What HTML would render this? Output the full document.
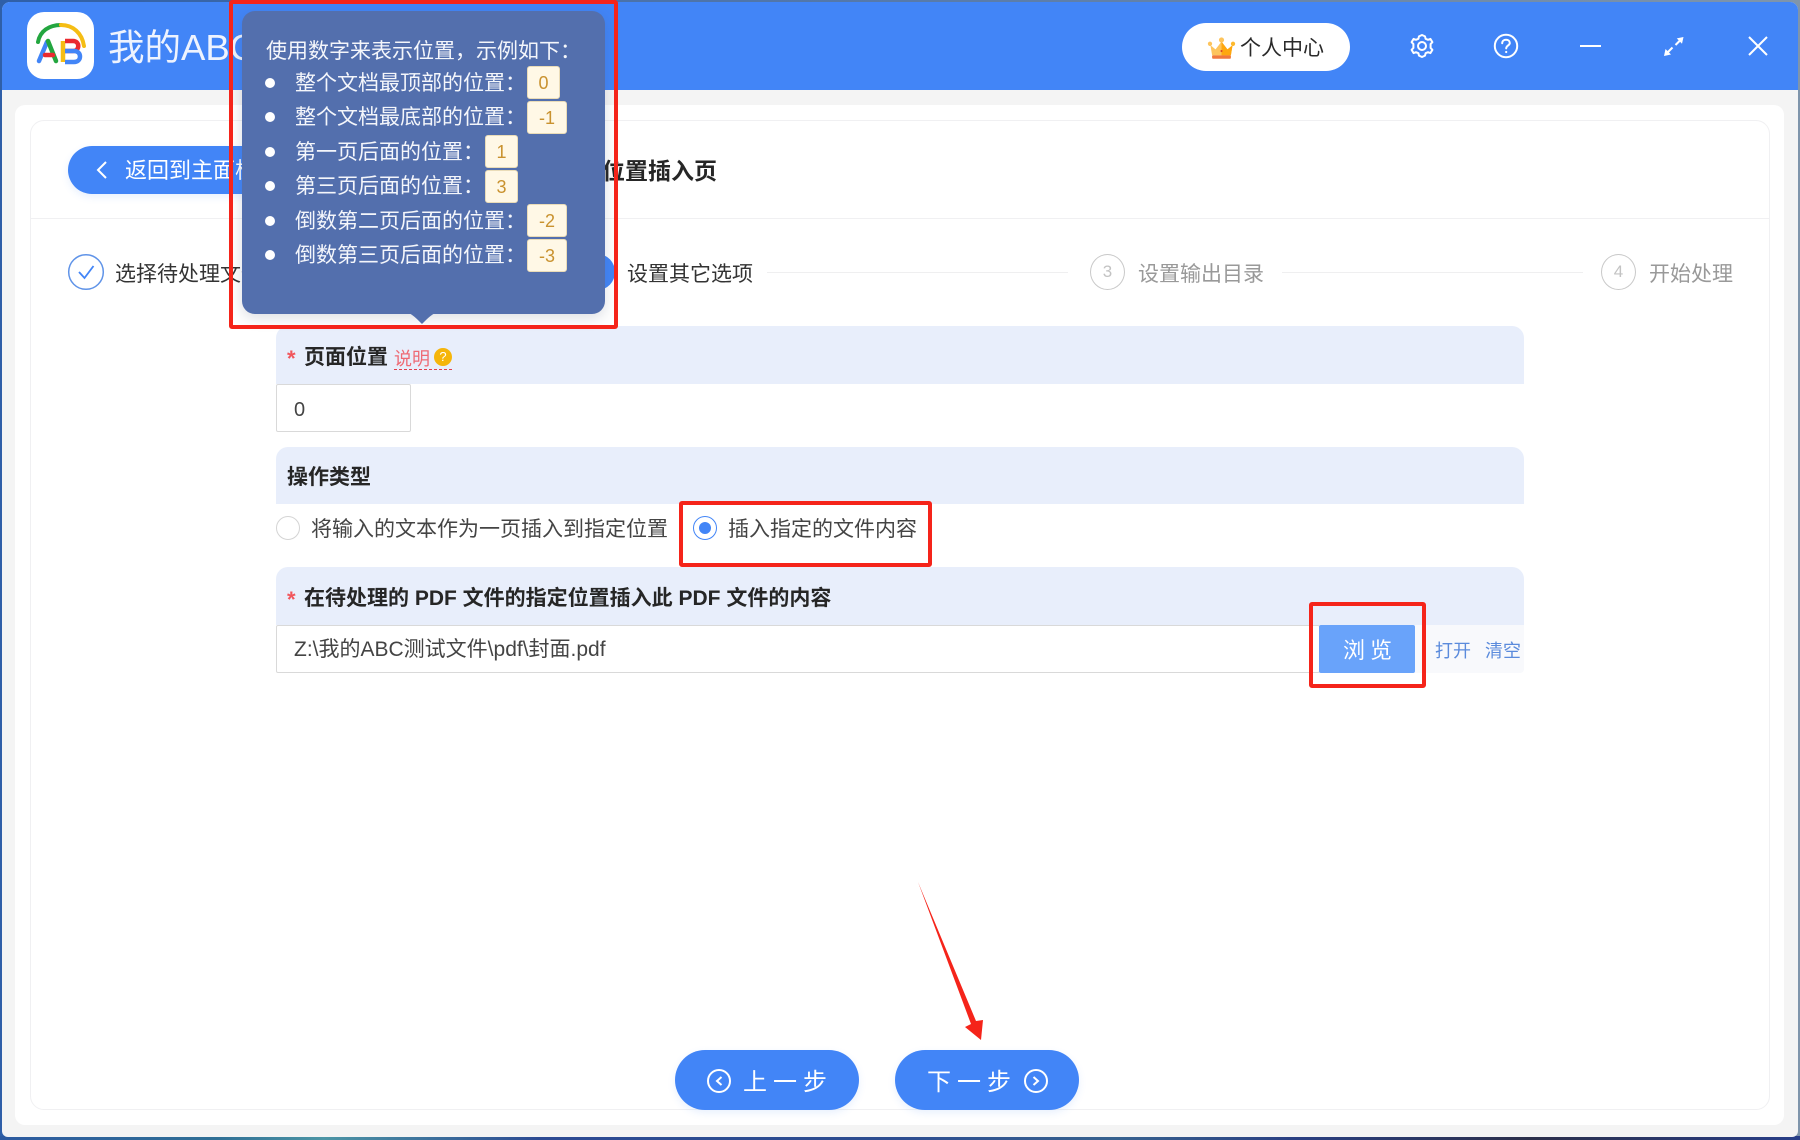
<!DOCTYPE html>
<html lang="zh-CN">
<head>
<meta charset="utf-8">
<title>我的ABC</title>
<style>
*{box-sizing:border-box}
html,body{margin:0;padding:0}
body{width:1800px;height:1140px;overflow:hidden;position:relative;background:linear-gradient(90deg,#2f5fa8 0,#7f95ab 100%);font-family:"Liberation Sans","Noto Sans CJK SC",sans-serif;color:#333}
.a{position:absolute}
.t{position:absolute;white-space:nowrap;line-height:30px;height:30px;font-size:21px;margin-top:2px}
.desk{left:0;top:1136px;width:1800px;height:4px;background:linear-gradient(90deg,#2d5aa0 0,#2f6f95 12%,#4c95a5 18%,#2c4a92 30%,#2d4d90 50%,#37628f 62%,#2a3f82 72%,#2b2f4a 85%,#283e88 100%)}
.win{left:2px;top:2px;width:1796px;height:1135px;background:#f4f4f4;border-radius:8px 8px 6px 6px;overflow:hidden}
.hdr{left:2px;top:2px;width:1796px;height:88px;background:#4285f7;border-radius:8px 8px 0 0}
.card{left:15px;top:105px;width:1769px;height:1020px;background:#fff;border-radius:10px}
.inner{left:30px;top:120px;width:1740px;height:990px;border:1px solid #f0f0f2;border-radius:14px}
.div{left:31px;top:218px;width:1738px;height:1px;background:#f0f0f2}
.sec{background:#e8eefb;left:276px;width:1248px;border-radius:12px 12px 0 0}
.b{font-weight:700;color:#262626;font-size:21px;margin-top:1px}
.star{color:#f1565c;font-weight:700;font-size:22px}
.inp{background:#fff;border:1px solid #d9d9d9;border-radius:2px}
.step{color:#999;font-size:21px}
.circ{width:35px;height:36px;border-radius:50%;border:1.5px solid #c9c9c9;color:#c3c3c3;font-size:17px;text-align:center;line-height:33px}
.line{height:1px;background:#efeff0;top:272px}
.red{border:4px solid #f5241a;border-radius:3px}
.pill{background:#4285f7;border-radius:30px;top:1050px;width:184px;height:60px;box-shadow:0 3px 8px rgba(66,133,247,.12)}
.btxt{color:#fff;font-size:24px;letter-spacing:6px;line-height:30px;height:30px;top:1068px;white-space:nowrap}
.tip{left:242px;top:11px;width:363px;height:303px;background:#536fad;border-radius:13px;box-shadow:0 4px 14px rgba(60,70,100,.18)}
.tt{color:#f4f6fb;font-size:21px;position:absolute;white-space:nowrap;line-height:30px;height:30px;margin-top:2px}
.dot{position:absolute;width:10px;height:10px;border-radius:50%;background:#fff;left:265px}
.code{position:absolute;height:33px;background:#fff8e6;border:1px solid #eadcb8;border-radius:3px;color:#c9922f;font-size:18px;text-align:center;line-height:32px}
</style>
</head>
<body>
<div class="a desk"></div>
<div class="a win"></div>
<div class="a hdr"></div>

<!-- logo -->
<svg class="a" style="left:20px;top:5px" width="85" height="80" viewBox="0 0 85 80">
<rect x="7" y="7" width="67" height="67" rx="17" fill="#fff"/>
<path d="M18 37C20 26 29 20 41 20" fill="none" stroke="#23a63f" stroke-width="4" stroke-linecap="round"/>
<path d="M41 20C53 20 62 28 64 41" fill="none" stroke="#f5bd14" stroke-width="4" stroke-linecap="round"/>
<path d="M19 56L27 37" fill="none" stroke="#4285f7" stroke-width="4.5" stroke-linecap="round"/>
<path d="M28 36L36 56" fill="none" stroke="#23a63f" stroke-width="4.5" stroke-linecap="round"/>
<path d="M25 50H33" fill="none" stroke="#ea2a30" stroke-width="4.5" stroke-linecap="round"/>
<path d="M43 36V57" fill="none" stroke="#f5bd14" stroke-width="4.5"/>
<path d="M45 36H53C60 36 60 46 53 46H45" fill="none" stroke="#ea2a30" stroke-width="4.5"/>
<path d="M45 46H54C62 46 62 57 54 57H45" fill="none" stroke="#4285f7" stroke-width="4.5"/>
</svg>
<div class="t" style="left:108px;top:25px;height:42px;line-height:42px;font-size:36.5px;color:#eef3fe">我的ABC</div>

<!-- header right -->
<div class="a" style="left:1182px;top:23px;width:168px;height:48px;background:#fff;border-radius:24px"></div>
<svg class="a" style="left:1207px;top:36px" width="29" height="25" viewBox="0 0 34 28">
<path d="M4 10L10 15L17 6L24 15L30 10L28 22H6Z" fill="#fdc45c"/>
<path d="M17 6L24 15L30 10L28 22H17Z" fill="#fea70f"/>
<circle cx="3.5" cy="8.5" r="2.5" fill="#fdc45c"/><circle cx="17" cy="4" r="3" fill="#fdc45c"/><circle cx="30.5" cy="8.5" r="2.5" fill="#fdb92e"/>
<rect x="6" y="22" width="22" height="4" rx="1" fill="#f0783c"/>
<circle cx="17" cy="17" r="1.2" fill="#d8432a"/>
</svg>
<div class="t" style="left:1240px;top:32px;color:#2a2a2a">个人中心</div>

<svg class="a" style="left:1408px;top:32px" width="28" height="28" viewBox="0 0 28 28" fill="none" stroke="#fff" stroke-width="2" stroke-linejoin="round">
<path d="M14 3L17 4.4L17.6 6.8L20 7.8L22.4 6.9L24.4 10.2L22.6 12V15.9L24.4 17.8L22.4 21.1L20 20.2L17.6 21.2L17 23.6L14 25L11 23.6L10.4 21.2L8 20.2L5.6 21.1L3.6 17.8L5.4 15.9V12L3.6 10.2L5.6 6.9L8 7.8L10.4 6.8L11 4.4Z"/>
<circle cx="14" cy="14" r="4"/>
</svg>
<svg class="a" style="left:1492px;top:32px" width="28" height="28" viewBox="0 0 28 28" fill="none" stroke="#fff" stroke-width="2">
<circle cx="14" cy="14" r="11.2"/>
<path d="M10.2 11.2C10.2 8.8 12 7.8 14 7.8C16.2 7.8 17.8 9 17.8 11C17.8 13.4 14.2 13.6 14.2 16.4" stroke-linecap="round"/>
<circle cx="14.2" cy="20" r="1.1" fill="#fff" stroke="none"/>
</svg>
<div class="a" style="left:1580px;top:45px;width:21px;height:2px;background:#fff"></div>
<svg class="a" style="left:1660px;top:32px" width="28" height="28" viewBox="0 0 28 28" fill="#fff">
<path d="M23.5 5L16.8 6.4L22 11.8Z"/><path d="M19.5 9L15.5 13" stroke="#fff" stroke-width="2" fill="none"/>
<path d="M4 24L5.5 17L11 22.5Z"/><path d="M8 20L12.5 15.5" stroke="#fff" stroke-width="2" fill="none"/>
</svg>
<svg class="a" style="left:1746px;top:34px" width="24" height="24" viewBox="0 0 24 24" stroke="#fff" stroke-width="2"><path d="M3 3L21 21M21 3L3 21"/></svg>

<!-- card -->
<div class="a card"></div>
<div class="a inner"></div>
<div class="a div"></div>

<!-- back & title -->
<div class="a" style="left:68px;top:146px;width:240px;height:48px;background:#4285f7;border-radius:24px;box-shadow:0 3px 8px rgba(66,133,247,.12)"></div>
<svg class="a" style="left:94px;top:160px" width="16" height="20" viewBox="0 0 16 20" fill="none" stroke="#fff" stroke-width="2"><path d="M12 2L4 10L12 18"/></svg>
<div class="t" style="left:125px;top:154px;color:#fff;font-size:22px">返回到主面板</div>
<div class="t" style="left:602px;top:154px;font-size:23px;font-weight:700;color:#262626">位置插入页</div>

<!-- steps -->
<svg class="a" style="left:67px;top:253px" width="38" height="38" viewBox="0 0 38 38" fill="none"><circle cx="19" cy="19" r="17.3" stroke="#5f93e8" stroke-width="1.5"/><path d="M12 19L17.5 25L26.5 13" stroke="#4285f7" stroke-width="1.8"/></svg>
<div class="t" style="left:115px;top:258px;color:#333">选择待处理文件</div>
<div class="a line" style="left:330px;width:240px"></div>
<div class="a" style="left:580px;top:254px;width:35px;height:36px;border-radius:50%;background:#4285f7"></div>
<div class="t" style="left:627px;top:258px;color:#333">设置其它选项</div>
<div class="a line" style="left:767px;width:301px"></div>
<div class="a circ" style="left:1090px;top:254px">3</div>
<div class="t step" style="left:1138px;top:258px">设置输出目录</div>
<div class="a line" style="left:1282px;width:301px"></div>
<div class="a circ" style="left:1601px;top:254px">4</div>
<div class="t step" style="left:1649px;top:258px">开始处理</div>

<!-- section 1 -->
<div class="a sec" style="top:326px;height:58px"></div>
<div class="t star" style="left:287px;top:342px">*</div>
<div class="t b" style="left:304px;top:342px">页面位置</div>
<div class="t" style="left:394px;top:342px;font-size:18px;color:#ee6a74;height:26px;line-height:30px;border-bottom:0">说明</div>
<div class="a" style="left:394px;top:369px;width:58px;border-top:1.5px dashed #e0404e"></div>
<div class="a" style="left:434px;top:348px;width:18px;height:18px;border-radius:50%;background:#f5b50a;color:#fff;font-size:13px;text-align:center;line-height:18px">?</div>
<div class="a inp" style="left:276px;top:384px;width:135px;height:48px"></div>
<div class="t" style="left:294px;top:393px;font-size:20px;color:#444">0</div>

<!-- section 2 -->
<div class="a sec" style="top:447px;height:57px"></div>
<div class="t b" style="left:287px;top:462px">操作类型</div>
<div class="a" style="left:276px;top:516px;width:24px;height:24px;border-radius:50%;border:1.2px solid #d4d4d4;background:#fff"></div>
<div class="t" style="left:311px;top:513px;color:#444">将输入的文本作为一页插入到指定位置</div>
<div class="a" style="left:693px;top:516px;width:24px;height:24px;border-radius:50%;border:1.5px solid #4285f7;background:#fff"></div>
<div class="a" style="left:699px;top:522px;width:12px;height:12px;border-radius:50%;background:#4285f7"></div>
<div class="t" style="left:728px;top:513px;color:#444">插入指定的文件内容</div>
<div class="a red" style="left:679px;top:501px;width:253px;height:66px"></div>

<!-- section 3 -->
<div class="a sec" style="top:567px;height:58px"></div>
<div class="t star" style="left:287px;top:583px">*</div>
<div class="t b" style="left:304px;top:583px">在待处理的 PDF 文件的指定位置插入此 PDF 文件的内容</div>
<div class="a" style="left:1415px;top:625px;width:109px;height:48px;background:#f8f9fc;border-radius:0 0 4px 0"></div>
<div class="a inp" style="left:276px;top:625px;width:1044px;height:48px"></div>
<div class="t" style="left:294px;top:633px;font-size:21px;color:#444">Z:\我的ABC测试文件\pdf\封面.pdf</div>
<div class="a" style="left:1319px;top:625px;width:96px;height:48px;background:#69a3fa;border-radius:2px"></div>
<div class="t" style="left:1343px;top:634px;color:#fff;font-size:22px;letter-spacing:5px">浏览</div>
<div class="t" style="left:1435px;top:634px;font-size:18px;color:#5b8bdc">打开</div>
<div class="t" style="left:1485px;top:634px;font-size:18px;color:#5b8bdc">清空</div>
<div class="a red" style="left:1309px;top:602px;width:117px;height:86px;border-width:4px"></div>

<!-- arrow -->
<svg class="a" style="left:900px;top:870px" width="100" height="180" viewBox="0 0 100 180"><path d="M18 12L76 151L83 150L81 170L65 157L71 154Z" fill="#f5241a"/></svg>

<!-- bottom buttons -->
<div class="a pill" style="left:675px"></div>
<svg class="a" style="left:706px;top:1068px" width="26" height="26" viewBox="0 0 26 26" fill="none" stroke="#fff" stroke-width="2"><circle cx="13" cy="13" r="11"/><path d="M15.5 9L11 13L15.5 17"/></svg>
<div class="a btxt" style="left:743px">上一步</div>
<div class="a pill" style="left:895px"></div>
<div class="a btxt" style="left:927px">下一步</div>
<svg class="a" style="left:1023px;top:1068px" width="26" height="26" viewBox="0 0 26 26" fill="none" stroke="#fff" stroke-width="2"><circle cx="13" cy="13" r="11"/><path d="M10.5 9L15 13L10.5 17"/></svg>

<!-- tooltip -->
<div class="a tip"></div>
<svg class="a" style="left:408px;top:313px" width="28" height="12" viewBox="0 0 28 12"><path d="M0 0H28C24 1 20 5 14 11C8 5 4 1 0 0Z" fill="#536fad"/></svg>
<div class="tt" style="left:266px;top:35px">使用数字来表示位置，示例如下：</div>
<div class="dot" style="top:78px"></div><div class="tt" style="left:295px;top:67px">整个文档最顶部的位置：</div><div class="code" style="left:527px;top:66px;width:33px">0</div>
<div class="dot" style="top:112px"></div><div class="tt" style="left:295px;top:101px">整个文档最底部的位置：</div><div class="code" style="left:527px;top:101px;width:40px">-1</div>
<div class="dot" style="top:147px"></div><div class="tt" style="left:295px;top:136px">第一页后面的位置：</div><div class="code" style="left:485px;top:135px;width:33px">1</div>
<div class="dot" style="top:181px"></div><div class="tt" style="left:295px;top:170px">第三页后面的位置：</div><div class="code" style="left:485px;top:170px;width:33px">3</div>
<div class="dot" style="top:216px"></div><div class="tt" style="left:295px;top:205px">倒数第二页后面的位置：</div><div class="code" style="left:527px;top:204px;width:40px">-2</div>
<div class="dot" style="top:250px"></div><div class="tt" style="left:295px;top:239px">倒数第三页后面的位置：</div><div class="code" style="left:527px;top:239px;width:40px">-3</div>
<div class="a red" style="left:229px;top:0;width:389px;height:329px"></div>
</body>
</html>
